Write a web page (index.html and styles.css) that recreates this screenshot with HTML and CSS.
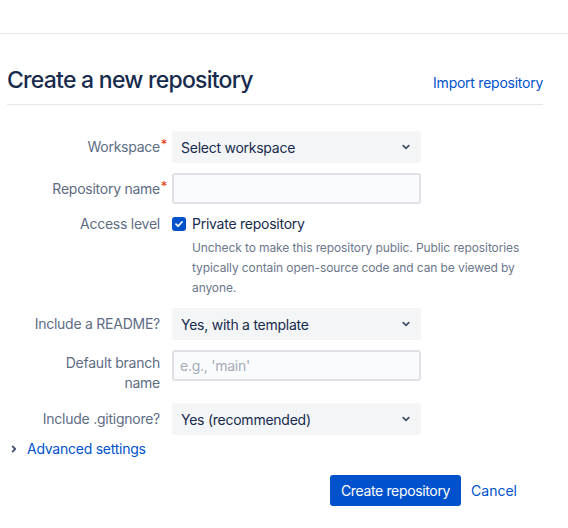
FILE: index.html
```html
<!DOCTYPE html>
<html lang="en">
<head>
<meta charset="utf-8">
<title>Create a new repository</title>
<link rel="stylesheet" href="styles.css">
</head>
<body>
<div class="topbar"></div>
<main class="page">
  <header class="page-header">
    <h1 class="title">Create a new repository</h1>
    <a class="link" href="#">Import repository</a>
  </header>

  <form class="form">
    <div class="grid">
      <label class="label required">Workspace</label>
      <div class="select">
        <span>Select workspace</span>
        <svg class="chev" width="10" height="10" viewBox="0 0 10 10"><path d="M2.2 3.6 L5 6.3 L7.8 3.6" fill="none" stroke="#42526E" stroke-width="1.8" stroke-linecap="round" stroke-linejoin="round"/></svg>
      </div>

      <label class="label required">Repository name</label>
      <div class="input"></div>

      <label class="label label-check">Access level</label>
      <div class="check-cell">
        <div class="check-row">
          <span class="checkbox"><svg width="14" height="14" viewBox="0 0 14 14"><path d="M4 7.2 L6.1 9.2 L10 5" fill="none" stroke="#fff" stroke-width="1.8" stroke-linecap="round" stroke-linejoin="round"/></svg></span>
          <span class="check-text">Private repository</span>
        </div>
        <p class="help">Uncheck to make this repository public. Public repositories typically contain open-source code and can be viewed by anyone.</p>
      </div>

      <label class="label">Include a README?</label>
      <div class="select">
        <span>Yes, with a template</span>
        <svg class="chev" width="10" height="10" viewBox="0 0 10 10"><path d="M2.2 3.6 L5 6.3 L7.8 3.6" fill="none" stroke="#42526E" stroke-width="1.8" stroke-linecap="round" stroke-linejoin="round"/></svg>
      </div>

      <label class="label label-two">Default branch name</label>
      <div class="input"><span class="placeholder">e.g., 'main'</span></div>

      <label class="label">Include .gitignore?</label>
      <div class="select">
        <span>Yes (recommended)</span>
        <svg class="chev" width="10" height="10" viewBox="0 0 10 10"><path d="M2.2 3.6 L5 6.3 L7.8 3.6" fill="none" stroke="#42526E" stroke-width="1.8" stroke-linecap="round" stroke-linejoin="round"/></svg>
      </div>
    </div>

    <div class="advanced">
      <svg class="adv-chev" width="8" height="10" viewBox="0 0 8 10"><path d="M2.6 2.4 L5.2 5 L2.6 7.6" fill="none" stroke="#42526E" stroke-width="1.8" stroke-linecap="round" stroke-linejoin="round"/></svg>
      <a class="link" href="#">Advanced settings</a>
    </div>

    <div class="actions">
      <button type="button" class="btn-primary">Create repository</button>
      <button type="button" class="btn-link">Cancel</button>
    </div>
  </form>
</main>
</body>
</html>
```

FILE: styles.css
```css
* { box-sizing: border-box; }

body {
  margin: 0;
  background: #fff;
  font-family: Inter, "Noto Sans", "Liberation Sans", sans-serif;
  font-size: 14px;
  letter-spacing: -0.25px;
  color: #172B4D;
}

.topbar {
  height: 34px;
  border-bottom: 1px solid #E4E5E7;
}

.page {
  width: 543px;
  padding-left: 7px;
}

.page-header {
  display: flex;
  justify-content: space-between;
  align-items: baseline;
  padding-top: 31px;
  padding-bottom: 9px;
  border-bottom: 1px solid #E4E5E7;
}

.title {
  margin: 0;
  font-size: 23px;
  line-height: 30px;
  font-weight: 500;
  color: #172B4D;
  letter-spacing: -0.75px;
}

.link {
  color: #0052CC;
  text-decoration: none;
  font-size: 14px;
  line-height: 20px;
}

.form {
  padding-top: 26px;
}

.grid {
  display: grid;
  grid-template-columns: 130px 249px;
  column-gap: 12px;
  row-gap: 10px;
  padding-left: 23px;
}

.label {
  position: relative;
  text-align: right;
  color: #5E6C84;
  line-height: 20px;
  padding-top: 6px;
}

.required::after {
  content: "*";
  position: absolute;
  right: -7px;
  top: 3px;
  color: #DE350B;
  font-size: 13px;
}

.label-check { padding-top: 0; }
.label-two { padding-top: 3px; }

.select {
  height: 32px;
  background: #F4F5F7;
  border-radius: 3px;
  display: flex;
  align-items: center;
  justify-content: space-between;
  padding: 0 10px 0 9px;
  color: #172B4D;
}

.chev { display: block; }

.input {
  height: 31px;
  background: #FAFBFC;
  border: 2px solid #DFE1E6;
  border-radius: 3px;
  display: flex;
  align-items: center;
  padding: 0 6px;
}

.placeholder { color: #A5ADBA; }

.check-row {
  display: flex;
  align-items: center;
  gap: 6px;
  height: 20px;
}

.checkbox {
  width: 14px;
  height: 14px;
  border-radius: 3px;
  background: #0052CC;
  display: block;
}

.checkbox svg { display: block; }

.check-text { color: #172B4D; line-height: 20px; }

.help {
  margin: 4px 0 0 20px;
  width: 345px;
  font-size: 12px;
  line-height: 20px;
  letter-spacing: -0.1px;
  color: #6B778C;
}

.advanced {
  display: flex;
  align-items: center;
  margin-top: 4px;
  height: 20px;
  padding-left: 3px;
  gap: 9px;
}

.adv-chev { display: block; }

.actions {
  display: flex;
  justify-content: flex-end;
  align-items: center;
  margin-top: 16px;
  padding-right: 16px;
}

.btn-primary {
  height: 31px;
  padding: 0 11px;
  background: #0052CC;
  color: #fff;
  border: none;
  border-radius: 3px;
  font: inherit;
  font-size: 14px;
  letter-spacing: -0.35px;
}

.btn-link {
  height: 31px;
  padding: 0 10px;
  background: transparent;
  border: none;
  color: #0052CC;
  font: inherit;
  font-size: 14px;
}
```
